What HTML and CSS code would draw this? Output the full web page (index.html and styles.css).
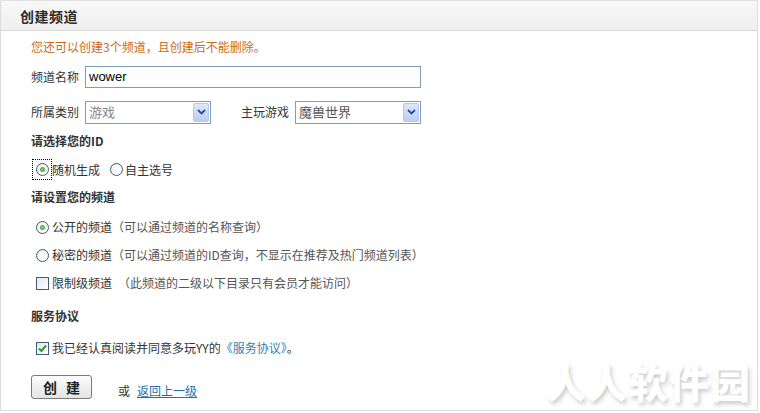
FILE: index.html
```html
<!DOCTYPE html>
<html lang="zh-CN">
<head>
<meta charset="utf-8">
<title>创建频道</title>
<link rel="stylesheet" href="styles.css">
</head>
<body>
<div class="panel">
  <div class="header"><h2 class="title">创建频道</h2></div>
  <div class="content">
    <div class="row notice">您还可以创建3个频道，且创建后不能删除。</div>

    <div class="row field-row r-name">
      <span class="label">频道名称</span>
      <span class="input">wower</span>
    </div>

    <div class="row field-row r-cat">
      <span class="label">所属类别</span>
      <span class="select sel-a"><span class="sel-text">游戏</span><span class="sel-btn"><svg width="9" height="6" viewBox="0 0 9 6"><path d="M1 1 L4.5 4.5 L8 1" fill="none" stroke="#2c4d8a" stroke-width="1.8"/></svg></span></span>
      <span class="label label-game">主玩游戏</span>
      <span class="select sel-b"><span class="sel-text">魔兽世界</span><span class="sel-btn"><svg width="9" height="6" viewBox="0 0 9 6"><path d="M1 1 L4.5 4.5 L8 1" fill="none" stroke="#2c4d8a" stroke-width="1.8"/></svg></span></span>
    </div>

    <div class="row heading h-id">请选择您的ID</div>

    <div class="row choice-row r-id">
      <span class="focus"><span class="radio checked"></span></span><span class="opt-text">随机生成</span>
      <span class="radio radio-2"></span><span class="opt-text">自主选号</span>
    </div>

    <div class="row heading h-chan">请设置您的频道</div>

    <div class="row choice-row r-pub">
      <span class="radio checked"></span><span class="opt-text">公开的频道</span><span class="desc">（可以通过频道的名称查询）</span>
    </div>
    <div class="row choice-row r-sec">
      <span class="radio"></span><span class="opt-text">秘密的频道</span><span class="desc">（可以通过频道的ID查询，不显示在推荐及热门频道列表）</span>
    </div>
    <div class="row choice-row r-lim">
      <span class="check"></span><span class="opt-text">限制级频道</span><span class="desc desc-gap">（此频道的二级以下目录只有会员才能访问）</span>
    </div>

    <div class="row heading h-svc">服务协议</div>

    <div class="row choice-row r-agree">
      <span class="check checked"><svg width="11" height="11" viewBox="0 0 11 11"><path d="M2 5.5 L4.5 8 L9 2.5" fill="none" stroke="#2f9a2f" stroke-width="2"/></svg></span><span class="opt-text">我已经认真阅读并同意多玩YY的<span class="doc-link">《服务协议》</span>。</span>
    </div>

    <div class="row action-row">
      <span class="btn">创 建</span>
      <span class="or">或</span>
      <a class="back" href="#">返回上一级</a>
    </div>
  </div>
  <div class="watermark">人人软件园</div>
</div>
</body>
</html>
```

FILE: styles.css
```css
* { box-sizing: border-box; }
html, body { margin: 0; padding: 0; background: #ffffff; }
body {
  font-family: "Noto Sans CJK SC", "Noto Sans", sans-serif;
  font-size: 12px;
  color: #333333;
}
.panel {
  position: relative;
  width: 758px;
  height: 411px;
  border: 1px solid #dcdcdc;
  border-top-color: #e2e2e2;
  background: #ffffff;
}
.header {
  height: 30px;
  background: linear-gradient(#f8f8f8, #efefef);
  border-bottom: 1px solid #dadada;
  padding-left: 19px;
  display: flex;
  align-items: center;
}
.title {
  margin: 0;
  font-size: 14px;
  font-weight: bold;
  color: #2b2b2b;
  letter-spacing: 0.5px;
}
.content {
  padding-left: 30px;
  display: flex;
  flex-direction: column;
}
.row {
  display: flex;
  align-items: center;
  height: 20px;
  line-height: 20px;
}
.notice { margin-top: 5px; height: 22px; color: #c66d1b; }
.field-row { height: 22px; }
.r-name { margin-top: 8px; }
.r-cat { margin-top: 13px; }
.label { width: 54px; flex: none; }
.label-game { margin-left: 30px; }
.input {
  width: 336px;
  height: 22px;
  border: 1px solid #7f9db9;
  padding-left: 3px;
  font-family: "Liberation Sans", Arial, sans-serif;
  font-size: 13px;
  color: #000;
  line-height: 20px;
}
.select {
  width: 126px;
  height: 23px;
  border: 1px solid #7f9db9;
  display: flex;
  align-items: center;
  justify-content: space-between;
  padding: 1px 1px 1px 3px;
}
.sel-text { color: #888; font-size: 13px; }
.sel-b .sel-text { color: #555; }
.sel-btn {
  width: 16px;
  height: 19px;
  border: 1px solid #b4c8f0;
  border-radius: 2px;
  background: linear-gradient(#dde7fb, #bccdf4);
  display: flex;
  align-items: center;
  justify-content: center;
}
.heading { font-weight: bold; color: #333; }
.h-id { margin-top: 8px; }
.r-id { margin-top: 8px; height: 21px; }
.h-chan { margin-top: 7px; }
.r-pub { margin-top: 10px; }
.r-sec { margin-top: 8px; }
.r-lim { margin-top: 8px; }
.h-svc { margin-top: 13px; }
.r-agree { margin-top: 12px; }
.focus {
  width: 20px;
  height: 21px;
  border: 1px dotted #000;
  display: flex;
  align-items: center;
  justify-content: center;
  margin-left: 1px;
}
.radio {
  width: 13px;
  height: 13px;
  flex: none;
  border-radius: 50%;
  border: 1px solid #3e5b7a;
  background: radial-gradient(circle at 60% 60%, #ffffff 30%, #e4e4e4 100%);
  position: relative;
  margin-left: 5px;
  margin-right: 3px;
}
.focus .radio { margin: 0; }
.radio.checked::after {
  content: "";
  position: absolute;
  left: 3px;
  top: 3px;
  width: 5px;
  height: 5px;
  border-radius: 50%;
  background: radial-gradient(#7fd27f, #2f9a2f);
}
.radio-2 { margin-left: 10px; margin-right: 2px; }
.opt-text { color: #333; }
.desc { color: #555; }
.desc-gap { margin-left: 6px; }
.check {
  width: 13px;
  height: 13px;
  flex: none;
  border: 1px solid #3e5b7a;
  background: linear-gradient(135deg, #e6e6e6, #ffffff);
  margin-left: 5px;
  margin-right: 3px;
  display: flex;
  align-items: center;
  justify-content: center;
}
.check svg { display: block; }
.doc-link { color: #2f7fae; }
.action-row { margin-top: 17px; height: 24px; }
.btn {
  width: 61px;
  height: 24px;
  border: 1px solid #7b7b7b;
  border-radius: 3px;
  background: linear-gradient(#fdfdfd, #e4e4e4);
  font-size: 14px;
  font-weight: bold;
  color: #222;
  letter-spacing: 3px;
  padding-left: 3px;
  display: flex;
  align-items: center;
  justify-content: center;
}
.or { margin-left: 26px; margin-top: 8px; }
.back {
  margin-left: 7px;
  margin-top: 8px;
  color: #1f6ea8;
  text-decoration: underline;
}
.watermark {
  position: absolute;
  right: 6px;
  bottom: 7px;
  font-family: "Noto Sans CJK SC", sans-serif;
  font-size: 40px;
  font-weight: 900;
  line-height: 44px;
  color: #ffffff;
  letter-spacing: 1px;
  text-shadow: 2px 3px 4px rgba(0, 0, 0, 0.2);
}
```
